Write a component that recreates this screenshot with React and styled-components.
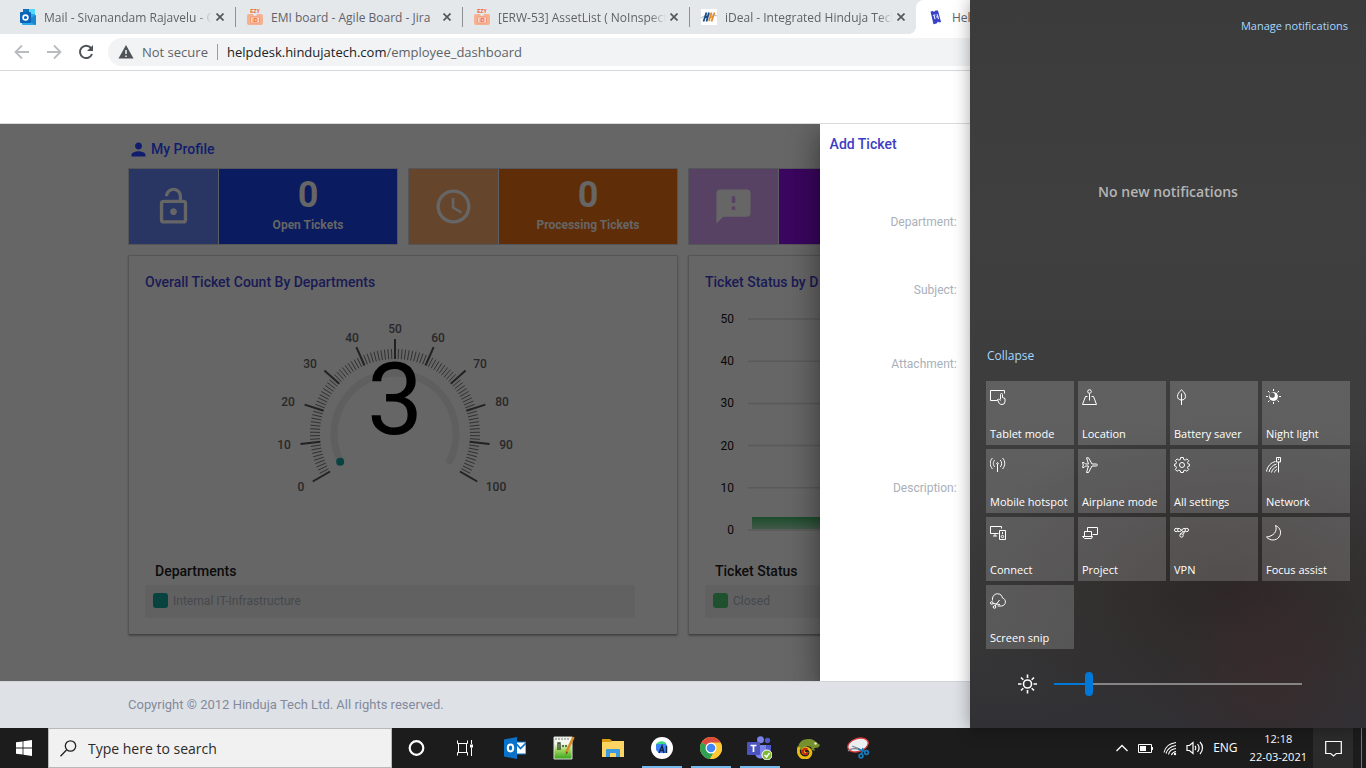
import React from "react";
import styled, { createGlobalStyle, css } from "styled-components";

const GlobalStyle = createGlobalStyle`
  *, *::before, *::after { box-sizing: border-box; }
  body { margin: 0; font-family: "Open Sans", "Noto Sans", sans-serif; }
  button, input, select, textarea { font: inherit; }
  button { border: 0; padding: 0; background: none; color: inherit; cursor: pointer; }
  svg { display: block; flex: none; }
`;

const Desktop = styled.div`
  position: relative;
  display: flex;
  flex-direction: column;
  height: 100vh;
  overflow: hidden;
  background: #fff;
`;

/* ---------- Browser ---------- */

const Browser = styled.div`
  flex: 1;
  min-height: 0;
  display: flex;
  flex-direction: column;
`;

const TabStrip = styled.div`
  display: flex;
  height: 34px;
  padding-left: 8px;
  background: #e5e8eb;
`;

const Tab = styled.div`
  position: relative;
  display: flex;
  align-items: center;
  width: 227px;
  padding-left: 12px;
  gap: 8px;
  color: #5f6368;
  font-size: 12px;
  ${(p) =>
    p.$active &&
    css`
      flex: 1;
      background: #fff;
      border-top-left-radius: 8px;
      &::before {
        content: "";
        position: absolute;
        left: -8px;
        bottom: 0;
        width: 8px;
        height: 8px;
        background: radial-gradient(circle at 0 0, #e5e8eb 8px, #fff 8px);
      }
    `}
`;

const TabTitle = styled.span`
  flex: 1;
  overflow: hidden;
  white-space: nowrap;
  mask-image: ${(p) =>
    p.$fade ? "linear-gradient(90deg, #000 calc(100% - 16px), transparent)" : "none"};
`;

const TabClose = styled.button`
  display: grid;
  place-items: center;
  width: 16px;
  height: 16px;
  margin: 0 -1px 0 -8px;
`;

const TabDivider = styled.span`
  width: 1px;
  height: 20px;
  margin-right: -1px;
  background: ${(p) => (p.$hidden ? "transparent" : "#8d9094")};
`;

const Toolbar = styled.div`
  display: flex;
  align-items: center;
  height: 37px;
  padding-left: 14px;
  gap: 16px;
  border-bottom: 1px solid #d6d8da;
`;

const NavButton = styled.button`
  width: 16px;
  height: 16px;
  color: ${(p) => (p.disabled ? "#b9bbbe" : "#4f5358")};
`;

const AddressBar = styled.div`
  flex: 1;
  display: flex;
  align-items: center;
  height: 28px;
  margin-left: -2px;
  padding-left: 10px;
  gap: 8px;
  border-radius: 14px 0 0 14px;
  background: #f1f3f4;
  color: #5f6368;
  font-size: 13px;
  white-space: nowrap;
`;

const AddressDivider = styled.span`
  width: 1px;
  height: 16px;
  margin: 0 1px;
  background: #9a9da1;
`;

const Host = styled.span`
  color: #202124;
`;

/* ---------- Page ---------- */

const Page = styled.div`
  flex: 1;
  min-height: 0;
  display: flex;
  flex-direction: column;
  font-family: Roboto, sans-serif;
`;

const SiteHeader = styled.header`
  height: 53px;
  border-bottom: 1px solid #d9dbdd;
  background: #fff;
`;

const Main = styled.main`
  position: relative;
  flex: 1;
  min-height: 0;
  overflow: hidden;
  padding: 14px 128px 0;
  background: #666;
`;

const ProfileLink = styled.a`
  display: flex;
  align-items: center;
  gap: 2px;
  height: 22px;
  color: #101d6e;
  font-size: 14px;
  font-weight: 500;
  text-decoration: none;
`;

const StatGrid = styled.div`
  display: grid;
  grid-template-columns: repeat(4, 1fr);
  gap: 10px;
  margin-top: 8px;
`;

const StatCard = styled.section`
  display: flex;
  height: 77px;
  border: 1px solid #545659;
  color: #666;
`;

const StatIcon = styled.div`
  display: grid;
  place-items: center;
  width: 90px;
  border-right: 1px solid #5c5f64;
  background: ${(p) => p.$color};
`;

const StatBody = styled.div`
  flex: 1;
  display: flex;
  flex-direction: column;
  align-items: center;
  padding-top: 6px;
  background: ${(p) => p.$color};
`;

const StatValue = styled.strong`
  font-size: 36px;
  line-height: 40px;
`;

const StatLabel = styled.span`
  font-size: 12px;
  font-weight: 700;
  line-height: 20px;
`;

const CardGrid = styled.div`
  display: grid;
  grid-template-columns: repeat(2, 1fr);
  gap: 10px;
  margin-top: 10px;
`;

const Card = styled.section`
  height: 380px;
  padding: 16px;
  border: 1px solid #555;
  border-bottom-color: #444;
  border-radius: 2px;
  box-shadow: 0 1px 2px rgba(0, 0, 0, 0.3);
`;

const CardTitle = styled.h2`
  margin: 0;
  color: #1a1a55;
  font-size: 14px;
  font-weight: 500;
  line-height: 20px;
`;

const ChartArea = styled.div`
  height: 269px;
  svg { overflow: visible; }
`;

const LegendTitle = styled.h3`
  margin: 0 0 4px 10px;
  color: #0c0c0c;
  font-size: 14px;
  font-weight: 500;
  line-height: 20px;
`;

const Legend = styled.div`
  display: flex;
  align-items: center;
  gap: 5px;
  height: 33px;
  margin-right: 26px;
  padding: 0 8px 2px;
  border-radius: 3px;
  background: #616161;
  color: #45484d;
  font-size: 12px;
`;

const Swatch = styled.span`
  width: 15px;
  height: 15px;
  border-radius: 3px;
  background: ${(p) => p.$color};
`;

const Drawer = styled.form`
  position: absolute;
  top: 0;
  right: 0;
  bottom: 0;
  width: 40%;
  padding: 10px 10px 0;
  background: #fff;
  box-shadow: 0 8px 10px -5px rgba(0, 0, 0, 0.2), 0 16px 24px 2px rgba(0, 0, 0, 0.2),
    0 6px 30px 5px rgba(0, 0, 0, 0.2);
`;

const DrawerTitle = styled.h2`
  margin: 0 0 52px;
  color: #3c3cc4;
  font-size: 14px;
  font-weight: 500;
  line-height: 20px;
`;

const Field = styled.div`
  display: grid;
  grid-template-columns: 127px 1fr;
  column-gap: 24px;
  align-items: center;
  height: ${(p) => p.$height}px;
`;

const FieldLabel = styled.label`
  color: #a9b0b9;
  font-size: 12px;
  line-height: 16px;
  text-align: right;
`;

const controlStyle = css`
  width: 100%;
  height: 32px;
  border: 1px solid #d5d9de;
  border-radius: 3px;
  background: #fff;
`;
const TextInput = styled.input`${controlStyle}`;
const Select = styled.select`${controlStyle}`;
const TextArea = styled.textarea`
  ${controlStyle}
  height: 96px;
  resize: none;
`;

const Footer = styled.footer`
  display: flex;
  align-items: center;
  height: 47px;
  padding: 0 128px 2px;
  border-top: 1px solid #d0d4d8;
  background: #dee1e6;
  color: #838a9c;
  font-size: 13px;
`;

/* ---------- Action centre ---------- */

const ActionCenter = styled.aside`
  position: absolute;
  top: 0;
  right: 0;
  bottom: 40px;
  width: 396px;
  display: flex;
  flex-direction: column;
  padding: 0 16px;
  background:
    radial-gradient(ellipse 100px 120px at 76% 92%, rgba(62, 40, 43, 0.5), transparent),
    radial-gradient(ellipse 280px 170px at 66% 81%, rgba(44, 38, 38, 0.95), transparent),
    linear-gradient(#3b3b3b 0%, #3f3f3f 30%, #3c3c3c 62%, #383838 85%, #313135 100%);
  box-shadow: 0 0 16px rgba(0, 0, 0, 0.35);
  color: #fff;
  font-size: 12px;
`;

const PanelLink = styled.a`
  color: #a6d8ff;
  font-size: ${(p) => (p.$small ? 11 : 12)}px;
  line-height: 16px;
  text-decoration: none;
`;

const PanelTop = styled.div`
  display: flex;
  justify-content: flex-end;
  padding: 18px 2px 0 0;
`;

const EmptyState = styled.p`
  margin: 148px 0 0;
  color: #b5b5b5;
  font-size: 14px;
  font-weight: 600;
  line-height: 20px;
  text-align: center;
`;

const QuickActions = styled.div`
  display: flex;
  flex-direction: column;
  margin-top: auto;
  padding-bottom: 24px;
`;

const PanelToggle = styled.button`
  align-self: flex-start;
  padding-left: 1px;
  color: #a6d8ff;
  font-size: 12px;
  line-height: 16px;
`;

const TileGrid = styled.div`
  display: grid;
  grid-template-columns: repeat(4, minmax(0, 1fr));
  grid-auto-rows: 64px;
  gap: 4px;
  margin: 17px 0 15px;
`;

const Tile = styled.button`
  display: flex;
  flex-direction: column;
  align-items: flex-start;
  justify-content: space-between;
  padding: 8px 0 3px 4px;
  background: rgba(255, 255, 255, 0.18);
  font-size: 11px;
  line-height: 16px;
  white-space: nowrap;
`;

const Brightness = styled.label`
  display: flex;
  align-items: center;
  gap: 16px;
  height: 40px;
  padding: 0 48px 0 31px;
`;

const Slider = styled.input`
  flex: 1;
  min-width: 0;
  height: 24px;
  margin: 0;
  appearance: none;
  background: transparent;
  &::-webkit-slider-runnable-track {
    height: 2px;
    background: linear-gradient(90deg, #0078d7 14%, #858585 14%);
  }
  &::-webkit-slider-thumb {
    appearance: none;
    width: 8px;
    height: 24px;
    margin-top: -11px;
    border-radius: 4px;
    background: #0078d7;
  }
`;

/* ---------- Taskbar ---------- */

const Taskbar = styled.nav`
  display: flex;
  height: 40px;
  background: #1c1c1c;
  color: #fff;
`;

const StartButton = styled.button`
  display: grid;
  place-items: center;
  width: 48px;
`;

const SearchBox = styled.label`
  display: flex;
  align-items: center;
  gap: 11px;
  width: 344px;
  padding-left: 11px;
  border: 1px solid #b9b9b9;
  background: #f1f1f1;
  color: #2b2b2b;
`;

const SearchInput = styled.input`
  flex: 1;
  min-width: 0;
  padding: 0;
  border: 0;
  outline: 0;
  background: transparent;
  font-size: 14px;
  &::placeholder { color: #2b2b2b; opacity: 1; }
`;

const AppButton = styled.button`
  display: grid;
  place-items: center;
  position: relative;
  width: 49px;
  ${(p) =>
    p.$running &&
    css`
      &::after {
        content: "";
        position: absolute;
        left: 5px;
        right: 4px;
        bottom: 0;
        height: 2px;
        background: #76b9ed;
      }
    `}
`;

const Tray = styled.div`
  display: flex;
  align-items: center;
  gap: 9px;
  margin-left: auto;
  font-size: 12px;
`;

const TrayButton = styled.button`
  line-height: 16px;
`;

const Clock = styled.time`
  margin: 0 -3px 0 3px;
  font-size: 11px;
  line-height: 18px;
  text-align: center;
`;

const NotificationButton = styled.button`
  display: grid;
  place-items: center;
  align-self: stretch;
  width: 40px;
  background: #2b2b2b;
`;

const ShowDesktop = styled.button`
  align-self: stretch;
  width: 5px;
  margin-left: -1px;
  border-left: 1px solid #777;
`;

/* ---------- Icons ---------- */

const OutlookFavicon = () => (
  <svg width="16" height="16" viewBox="0 0 16 16">
    <rect x="3" y="0" width="12" height="10" rx="1" fill="#28a8ea" />
    <rect x="9" y="0" width="6" height="5" fill="#50d9ff" />
    <rect x="3" y="0" width="6" height="4" fill="#0f6fc0" />
    <path d="M2 15V9l7 2 7-5v9a1 1 0 0 1-1 1H3a1 1 0 0 1-1-1z" fill="#28a8ea" />
    <path d="M16 6v9a1 1 0 0 1-.6.9L7 11z" fill="#1a86d0" />
    <rect x="0" y="3" width="11" height="11" rx="1" fill="#0a63b8" />
    <circle cx="5.5" cy="8.5" r="2.4" fill="none" stroke="#fff" strokeWidth="1.6" />
  </svg>
);

const EzyFavicon = () => (
  <svg width="16" height="16" viewBox="0 0 16 16" fontFamily="Liberation Sans, sans-serif" fontWeight="700">
    <text x="8" y="4" fontSize="5" textAnchor="middle" fill="#ee5a24">EZY</text>
    <path d="M2 5h4a2 2 0 0 0 4 0h4a2 2 0 0 1 2 2v7a2 2 0 0 1-2 2H2a2 2 0 0 1-2-2V7a2 2 0 0 1 2-2z" fill="#f6b092" />
    <rect x="3.500" y="8" width="9" height="6" rx="1" fill="#fbd9c9" stroke="#f09a78" />
    <text x="8" y="13" fontSize="5" textAnchor="middle" fill="#ee5a24">iD</text>
  </svg>
);

const HindujaFavicon = () => (
  <svg width="16" height="16" viewBox="0 0 16 16">
    <rect width="16" height="16" fill="#fff" />
    <path d="M0 9c5-4 10-4 16-2" stroke="#b9c2cc" strokeWidth="1.300" fill="none" />
    <path d="M5.500 3.500 2.500 12.500M8 3.500 5.500 12.500M4 8h3" stroke="#1b4c86" strokeWidth="1.800" fill="none" />
    <path d="M9.500 8h3M13.500 3.500l-3 9M10.500 3.500 8 12" stroke="#e58a26" strokeWidth="1.700" fill="none" />
  </svg>
);

const HelpdeskFavicon = () => (
  <svg width="16" height="16" viewBox="0 0 16 16">
    <path d="M2.500 2.500 5 2l1 1 1.500-1.600L10 1.500l3 11.500-2 .5-1-1-1.500 2-3 .8z" fill="#3640c8" />
    <path d="M5 6.500l2.500-.8M6 6.200l1 4M9 5.200l1.500 5M8 8l2.500-.8" stroke="#dfe2ff" strokeWidth="1.200" fill="none" />
  </svg>
);

const CloseIcon = () => (
  <svg width="8" height="8" viewBox="0 0 8 8">
    <path d="M.5.5l7 7M7.500.5l-7 7" stroke="#54575b" strokeWidth="1.700" />
  </svg>
);

const ArrowIcon = ({ flip }) => (
  <svg width="16" height="16" viewBox="0 0 16 16" fill="none" stroke="currentColor" strokeWidth="1.800">
    <path d={flip ? "M1 8h13M8 1.500 14.500 8 8 14.500" : "M15 8H2M8 1.500 1.500 8 8 14.500"} />
  </svg>
);

const ReloadIcon = () => (
  <svg width="16" height="16" viewBox="0 0 16 16">
    <path d="M13 4a6.200 6.200 0 1 0 1 6" fill="none" stroke="currentColor" strokeWidth="2" />
    <path d="M15 1v6H9z" fill="currentColor" />
  </svg>
);

const WarningIcon = () => (
  <svg width="16" height="16" viewBox="0 0 16 16">
    <path d="M8 1l7.500 13.500H.5z" fill="#4f5358" />
    <path d="M8 6v4M8 11.500v1.500" stroke="#f1f3f4" strokeWidth="1.500" />
  </svg>
);

const material = {
  person: "M12 12c2.210 0 4-1.790 4-4s-1.790-4-4-4-4 1.790-4 4 1.790 4 4 4zm0 2c-2.670 0-8 1.340-8 4v2h16v-2c0-2.660-5.330-4-8-4z",
  lockOpen: "M12 17c1.100 0 2-.9 2-2s-.9-2-2-2-2 .9-2 2 .9 2 2 2zm6-9h-1V6c0-2.760-2.240-5-5-5S7 3.240 7 6h1.900c0-1.710 1.390-3.100 3.100-3.100s3.100 1.390 3.100 3.100v2H6c-1.100 0-2 .9-2 2v10c0 1.100.9 2 2 2h12c1.100 0 2-.9 2-2V10c0-1.100-.9-2-2-2zm0 12H6V10h12v10z",
  clock: "M11.990 2C6.470 2 2 6.480 2 12s4.470 10 9.990 10C17.520 22 22 17.520 22 12S17.520 2 11.990 2zM12 20c-4.420 0-8-3.580-8-8s3.580-8 8-8 8 3.580 8 8-3.580 8-8 8zm.5-13H11v6l5.250 3.150.75-1.230-4.500-2.670z",
  feedback: "M20 2H4c-1.100 0-1.990.9-1.990 2L2 22l4-4h14c1.100 0 2-.9 2-2V4c0-1.100-.9-2-2-2zm-7 12h-2v-2h2v2zm0-4h-2V6h2v4z",
};

const MaterialIcon = ({ name, size }) => (
  <svg width={size} height={size} viewBox="0 0 24 24" fill="currentColor">
    <path d={material[name]} />
  </svg>
);

const TileIcon = ({ children }) => (
  <svg width="16" height="16" viewBox="0 0 16 16" fill="none" stroke="#fff" strokeWidth="1">
    {children}
  </svg>
);

const tiles = [
  ["Tablet mode", <><path d="M7.500 11.500H.5v-10h14v3" /><path d="M10.500 10.500V5.500a1 1 0 0 1 2 0v3l2.500 1v3a3 3 0 0 1-3 3c-2 0-3-1-3.500-2.500L7.500 10.500c1-.8 2-.2 3 1" /></>],
  ["Location", <><circle cx="7.500" cy="2.500" r="1.800" /><path d="M7.500 4.500v7M5.500 7.500h-2l-3 8h14l-3-8h-2" /></>],
  ["Battery saver", <path d="M7.500 16V4.500M7.500.8C5 3 3.500 5 3.500 7.500c0 2 1.500 3.500 4 3.500s4-1.500 4-3.500C11.500 5 10 3 7.500.8z" />],
  ["Night light", <><circle cx="7.500" cy="7.500" r="4" fill="#fff" /><circle cx="6.200" cy="6.200" r="2.600" fill="#5e5e5e" stroke="none" /><path d="M7.500 0v2M7.500 13v2M0 7.500h2M13 7.500h2M2 2l1.500 1.500M11.500 11.500 13 13M2 13l1.500-1.500M11.500 3.500 13 2" /></>],
  ["Mobile hotspot", <><path d="M7.500 7v8" /><circle cx="7.500" cy="6.500" r=".8" /><path d="M4.800 10c-2-2-2-5 0-7M10.200 10c2-2 2-5 0-7M2.500 12c-3-3.500-3-8 0-11M12.500 12c3-3.500 3-8 0-11" /></>],
  ["Airplane mode", <path d="M.5 5.500H2L3.500 7h3L4.500.8h2L10 7h4c2 .2 2 1.800 0 2h-4l-3.500 6.500h-2L6.500 9h-3L2 10.500H.5l.8-2.500z" />],
  ["All settings", <><circle cx="8" cy="8" r="2.500" /><path d="M6.700.5h2.600l.4 2 1.500.6 1.700-1.200 1.800 1.800-1.200 1.700.6 1.500 1.500.3v1.800l-1.500.3-.6 1.500 1.200 1.700-1.800 1.800-1.700-1.200-1.500.6-.4 1.800H6.700l-.4-1.800-1.500-.6-1.700 1.200-1.800-1.800 1.200-1.700-.6-1.500L.5 9V7.200l1.400-.3.6-1.500-1.200-1.700 1.800-1.800 1.700 1.200 1.500-.6z" /></>],
  ["Network", <><path d="M.5 14.500C1.500 9 5 5.500 9.500 4.500M3 15C4 11 6.500 8 10.500 7M5.500 15.500C6 13 8 10.500 11 9.500M8.500 15.500c.3-1.500 1.200-2.500 2.500-3" /><path d="M10.500.5h4v4.500h-4zM12.500 5v10.500M12.500 1.500v1.500" /></>],
  ["Connect", <><path d="M8.500 8.500h-8v-7h11v2M5 8.500V11M3 11h4" /><path d="M9.500 5.500h6v9h-6z" /><path d="M12.500 7v2" /><circle cx="12.500" cy="11.500" r="1.200" /></>],
  ["Project", <><path d="M5.500 6V2.500h10v7h-5" /><path d="M2.500 6.500h7v5h-7zM.5 11.500h10l-1 2h-7z" /></>],
  ["VPN", <><circle cx="2.200" cy="5" r="1.700" /><circle cx="7.500" cy="10.500" r="1.700" /><circle cx="12.800" cy="5" r="1.700" /><path d="M3.500 3.500h2l4 3.500M3.800 6.500h1.700c2.500 0 2-3 4.500-3h1.500M6 9.200C8 8 8 6.500 11.300 6.200M9 9.500C10.500 9 9 7 11.300 6.500" /></>],
  ["Focus assist", <path d="M9.500.5c2.500 6-2.500 11-9 11.500 3.500 4 9.500 4 12.500 0s1.500-9.500-3.500-11.500z" />],
  ["Screen snip", <><path d="M2.500 7.500C2 4 4 .8 7.500.8S12 3 12.500 5c4 1 4 7.500-1 8H7.500" /><circle cx="1.800" cy="10" r="1.300" /><circle cx="4.500" cy="14" r="1.300" /><path d="M3 10.500l7 1M5 13l4.500-6" /></>],
];

const SunIcon = () => (
  <svg width="21" height="20" viewBox="0 0 20 20" fill="none" stroke="#fff" strokeWidth="1.600">
    <circle cx="10" cy="10" r="4" />
    <path d="M10 .5V4M10 16v3.500M.5 10H4M16 10h3.500M3.500 3.500l2.300 2.300M14.200 14.200l2.300 2.300M3.500 16.500l2.300-2.300M14.200 5.800l2.300-2.300" />
  </svg>
);

const WindowsIcon = () => (
  <svg width="16" height="16" viewBox="0 0 16 16" fill="#fff">
    <path d="M0 2.300 6.600 1.400v6.200H0zM7.400 1.300 16 0v7.600H7.400zM0 8.400h6.600v6.200L0 13.700zM7.400 8.400H16V16l-8.600-1.300z" />
  </svg>
);

const SearchIcon = () => (
  <svg width="17" height="17" viewBox="0 0 17 17" fill="none" stroke="#222" strokeWidth="1.300">
    <circle cx="10.500" cy="6" r="5.200" />
    <path d="M6.500 10 .5 16.300" />
  </svg>
);

const CortanaIcon = () => (
  <svg width="18" height="18" viewBox="0 0 18 18">
    <circle cx="8.500" cy="9" r="6.800" fill="none" stroke="#fff" strokeWidth="2.200" />
  </svg>
);

const TaskViewIcon = () => (
  <svg width="18" height="16" viewBox="0 0 18 16" fill="none" stroke="#fff">
    <path d="M.5.5v3h10v-3M1.500 3.500v9M9.500 3.500v9M.5 15.500v-3h10v3M14.500 0v4M14.500 7.500V16" />
    <path d="M13 4.500h3v3h-3z" fill="#fff" stroke="none" />
  </svg>
);

const OutlookIcon = () => (
  <svg width="22" height="22" viewBox="0 0 22 22">
    <rect x="11" y="5" width="11" height="12" fill="#fff" />
    <path d="M11 5h11v12H11z" fill="none" stroke="#0a72c8" />
    <path d="M12.500 7l4 4.500L22 6" fill="none" stroke="#0a72c8" strokeWidth="1.700" />
    <path d="M0 2.500 13 0v22L0 19.500z" fill="#0a72c8" />
    <ellipse cx="6.500" cy="11" rx="2.700" ry="3.400" fill="none" stroke="#fff" strokeWidth="2" />
  </svg>
);

const NotepadIcon = () => (
  <svg width="22" height="24" viewBox="0 0 22 24">
    <defs>
      <linearGradient id="notepadGreen" x2="0" y2="1">
        <stop offset=".3" stopColor="#f4f7f0" />
        <stop offset=".6" stopColor="#9ed65c" />
        <stop offset="1" stopColor="#37a31b" />
      </linearGradient>
    </defs>
    <path d="M1 1h18v22H1z" fill="url(#notepadGreen)" stroke="#d9ddd5" />
    <path d="M3 2v2M6 2v2M9 2v2M12 2v2M15 2v2" stroke="#777" />
    <path d="M5 14V7h2v7M9 10h2M12 10h2" stroke="#314b2c" strokeWidth="1.400" fill="none" />
    <path d="M20.500 1 13 17" stroke="#d98b24" strokeWidth="2.600" />
    <path d="M13.500 15.500 12.500 19l2.500-2.500z" fill="#6b4716" />
  </svg>
);

const FolderIcon = () => (
  <svg width="22" height="20" viewBox="0 0 22 20">
    <path d="M0 1h8l2 2h12v5H0z" fill="#dc9a11" />
    <path d="M0 4h9l1-1h12v16H0z" fill="#fcd462" />
    <path d="M4 19v-7a1 1 0 0 1 1-1h12a1 1 0 0 1 1 1v7h-4v-4H8v4z" fill="#3a9be0" />
  </svg>
);

const StudioIcon = () => (
  <svg width="22" height="22" viewBox="0 0 22 22">
    <circle cx="11" cy="11" r="11" fill="#fff" />
    <path d="M5 7c2-3 7-4 10-1v4H5z" fill="#3ddc84" />
    <path d="M6 7h8a2 2 0 0 1 2 2v7H8l-3-3V8z" fill="#3b82f6" />
    <path d="M8 16l3-7 2 7M9 13.500h3.500M15.500 9v7" fill="none" stroke="#14264a" strokeWidth="1.500" />
  </svg>
);

const ChromeIcon = () => (
  <svg width="22" height="22" viewBox="0 0 22 22">
    <circle cx="11" cy="11" r="11" fill="#fbbc2c" />
    <path d="M11 11 1.500 5.500A11 11 0 0 1 20.500 5.500z" fill="#dd4b3e" />
    <path d="M11 11 1.500 5.500A11 11 0 0 0 10 22l5-9z" fill="#2fa152" />
    <path d="M11 5.500h9.500a11 11 0 0 1-10.500 16.500l5-9z" fill="#fcc934" />
    <circle cx="11" cy="11" r="5.500" fill="#fff" />
    <circle cx="11" cy="11" r="4.300" fill="#4285f4" />
  </svg>
);

const TeamsIcon = () => (
  <svg width="25" height="24" viewBox="0 0 25 24">
    <circle cx="20.500" cy="4.500" r="2.700" fill="#5059c9" />
    <circle cx="13.500" cy="3.700" r="3.500" fill="#7b83eb" />
    <path d="M16 9h8v6a4 4 0 0 1-6 3z" fill="#5059c9" />
    <path d="M8 9h11v8a5.500 5.500 0 0 1-11 0z" fill="#7b83eb" />
    <rect y="6" width="13" height="13" rx="1" fill="#4b53bc" />
    <path d="M3.500 9.500h6M6.500 9.500V16" stroke="#fff" strokeWidth="1.700" />
    <circle cx="20" cy="19" r="5" fill="#7ab930" stroke="#fff" />
    <path d="M17.500 19l2 2 3-4" fill="none" stroke="#fff" strokeWidth="1.500" />
  </svg>
);

const ChameleonIcon = () => (
  <svg width="23" height="21" viewBox="0 0 23 21">
    <path d="M1 11C1 5 5 1 11 1c3 0 6 .5 8 3l4 3c-1 3-4 3-6 3l1 3-3-1-1-3c-5-2-8 1-6 4z" fill="#75902d" />
    <path d="M2 9c-2 6 1 11 6 11s7-5 5-8-7-2-7 1 4 3 4 1" fill="none" stroke="#e9b711" strokeWidth="3" />
    <path d="M10.500 11.500c-3-2-6 1-4 3.500s5 .5 3-1" fill="none" stroke="#c92211" strokeWidth="2" />
    <circle cx="18.500" cy="5.500" r="1.300" fill="#e7edb8" />
  </svg>
);

const SnipIcon = () => (
  <svg width="24" height="22" viewBox="0 0 24 22">
    <ellipse cx="12" cy="8" rx="10.500" ry="6.500" transform="rotate(-18 12 8)" fill="#eceff2" stroke="#d5393c" strokeWidth="1.300" />
    <path d="M2 14c3-3 6-3 10-2M6 9l8 3" stroke="#858b91" strokeWidth="1.300" fill="none" />
    <circle cx="15" cy="19" r="1.900" fill="none" stroke="#187bbb" strokeWidth="1.700" />
    <circle cx="20.500" cy="15.500" r="1.900" fill="none" stroke="#187bbb" strokeWidth="1.700" />
    <path d="M15.500 17l1.500-6M19 14.500l-7-2.500" stroke="#187bbb" strokeWidth="1.500" />
  </svg>
);

const apps = [
  { label: "Cortana", icon: <CortanaIcon /> },
  { label: "Task View", icon: <TaskViewIcon /> },
  { label: "Outlook", icon: <OutlookIcon /> },
  { label: "Notepad++", icon: <NotepadIcon /> },
  { label: "File Explorer", icon: <FolderIcon /> },
  { label: "Android Studio", icon: <StudioIcon />, running: true },
  { label: "Chrome", icon: <ChromeIcon />, running: true },
  { label: "Teams", icon: <TeamsIcon />, running: true },
  { label: "Chameleon", icon: <ChameleonIcon /> },
  { label: "Snipping Tool", icon: <SnipIcon /> },
];

/* ---------- Charts ---------- */

const polar = (angle, r) => {
  const a = (angle * Math.PI) / 180;
  return [250 + r * Math.sin(a), 142 - r * Math.cos(a)];
};

const gaugeLabels = [
  [156, 195], [139, 153], [143, 110], [165, 72], [207, 46], [250, 37],
  [293, 46], [335, 72], [357, 110], [361, 153], [351, 195],
];

function Gauge() {
  const ticks = Array.from({ length: 101 }, (_, i) => {
    const angle = -120 + i * 2.4;
    const major = i % 10 === 0;
    const [x1, y1] = polar(angle, 75);
    const [x2, y2] = polar(angle, major ? 95 : 85);
    return (
      <line key={i} x1={x1} y1={y1} x2={x2} y2={y2} stroke={major ? "#222" : "#303030"} strokeWidth={major ? 2 : 1} />
    );
  });
  const [sx, sy] = polar(-116, 61);
  const [ex, ey] = polar(116, 61);
  return (
    <svg width="500" height="268" viewBox="0 0 500 268">
      <path d={`M${sx} ${sy}A61 61 0 1 1 ${ex} ${ey}`} fill="none" stroke="#5f5f5f" strokeWidth="7" strokeLinecap="round" />
      <circle cx={sx} cy={sy + 1} r="4" fill="#094340" />
      {ticks}
      {gaugeLabels.map(([x, y], i) => (
        <text key={i} x={x} y={y + 4} textAnchor="middle" fontSize="12" fontWeight="500" fill="#282828">
          {i * 10}
        </text>
      ))}
      <text x="250" y="142" textAnchor="middle" fontSize="100" fill="#000">3</text>
    </svg>
  );
}

function BarChart() {
  return (
    <svg width="500" height="268" viewBox="0 0 500 268">
      <defs>
        <linearGradient id="barGreen" x2="0" y2="1">
          <stop offset="0" stopColor="#1d4c2c" />
          <stop offset="1" stopColor="#41594a" />
        </linearGradient>
      </defs>
      {[50, 40, 30, 20, 10, 0].map((value, i) => (
        <g key={value}>
          <line x1="43" x2="490" y1={27 + i * 42.2} y2={27 + i * 42.2} stroke="#5a5a5a" strokeWidth="1.500" />
          <text x="29" y={31 + i * 42.2} textAnchor="end" fontSize="12" fill="#080808">{value}</text>
        </g>
      ))}
      <rect x="47" y="225" width="200" height="12" fill="url(#barGreen)" />
    </svg>
  );
}

/* ---------- Page assembly ---------- */

const tabs = [
  { title: "Mail - Sivanandam Rajavelu - O", icon: <OutlookFavicon />, fade: true },
  { title: "EMI board - Agile Board - Jira", icon: <EzyFavicon /> },
  { title: "[ERW-53] AssetList ( NoInspect", icon: <EzyFavicon />, fade: true },
  { title: "iDeal - Integrated Hinduja Tech", icon: <HindujaFavicon />, fade: true },
];

const stats = [
  { icon: "lockOpen", label: "Open Tickets", value: 0, tint: "#293563", color: "#0a1b5f" },
  { icon: "clock", label: "Processing Tickets", value: 0, tint: "#66452d", color: "#602d09" },
  { icon: "feedback", tint: "#584264", color: "#3a065f" },
];

export default function App() {
  return (
    <Desktop>
      <GlobalStyle />
      <Browser>
        <TabStrip>
          {tabs.map((tab, i) => (
            <Tab key={tab.title}>
              {tab.icon}
              <TabTitle $fade={tab.fade}>{tab.title}</TabTitle>
              <TabClose aria-label="Close tab"><CloseIcon /></TabClose>
              <TabDivider $hidden={i === tabs.length - 1} />
            </Tab>
          ))}
          <Tab $active>
            <HelpdeskFavicon />
            <TabTitle>Hel</TabTitle>
          </Tab>
        </TabStrip>
        <Toolbar>
          <NavButton disabled aria-label="Back"><ArrowIcon /></NavButton>
          <NavButton disabled aria-label="Forward"><ArrowIcon flip /></NavButton>
          <NavButton aria-label="Reload"><ReloadIcon /></NavButton>
          <AddressBar>
            <WarningIcon />
            <span>Not secure</span>
            <AddressDivider />
            <span><Host>helpdesk.hindujatech.com</Host>/employee_dashboard</span>
          </AddressBar>
        </Toolbar>

        <Page>
          <SiteHeader />
          <Main>
            <ProfileLink href="#profile">
              <MaterialIcon name="person" size={21} />
              My Profile
            </ProfileLink>
            <StatGrid>
              {stats.map((stat) => (
                <StatCard key={stat.icon}>
                  <StatIcon $color={stat.tint}><MaterialIcon name={stat.icon} size={41} /></StatIcon>
                  <StatBody $color={stat.color}>
                    {stat.label && (
                      <>
                        <StatValue>{stat.value}</StatValue>
                        <StatLabel>{stat.label}</StatLabel>
                      </>
                    )}
                  </StatBody>
                </StatCard>
              ))}
            </StatGrid>
            <CardGrid>
              <Card>
                <CardTitle>Overall Ticket Count By Departments</CardTitle>
                <ChartArea><Gauge /></ChartArea>
                <LegendTitle>Departments</LegendTitle>
                <Legend><Swatch $color="#094340" />Internal IT-Infrastructure</Legend>
              </Card>
              <Card>
                <CardTitle>Ticket Status by D</CardTitle>
                <ChartArea><BarChart /></ChartArea>
                <LegendTitle>Ticket Status</LegendTitle>
                <Legend><Swatch $color="#1f512f" />Closed</Legend>
              </Card>
            </CardGrid>

            <Drawer>
              <DrawerTitle>Add Ticket</DrawerTitle>
              <Field $height={32}>
                <FieldLabel htmlFor="department">Department:</FieldLabel>
                <Select id="department" />
              </Field>
              <Field $height={104}>
                <FieldLabel htmlFor="subject">Subject:</FieldLabel>
                <TextInput id="subject" />
              </Field>
              <Field $height={44}>
                <FieldLabel htmlFor="attachment">Attachment:</FieldLabel>
                <TextInput id="attachment" />
              </Field>
              <Field $height={204}>
                <FieldLabel htmlFor="description">Description:</FieldLabel>
                <TextArea id="description" />
              </Field>
            </Drawer>
          </Main>
          <Footer>Copyright © 2012 Hinduja Tech Ltd. All rights reserved.</Footer>
        </Page>
      </Browser>

      <ActionCenter>
        <PanelTop><PanelLink $small href="#manage">Manage notifications</PanelLink></PanelTop>
        <EmptyState>No new notifications</EmptyState>
        <QuickActions>
          <PanelToggle>Collapse</PanelToggle>
          <TileGrid>
            {tiles.map(([label, icon]) => (
              <Tile key={label}>
                <TileIcon>{icon}</TileIcon>
                {label}
              </Tile>
            ))}
          </TileGrid>
          <Brightness>
            <SunIcon />
            <Slider type="range" min="0" max="100" defaultValue="13" aria-label="Brightness" />
          </Brightness>
        </QuickActions>
      </ActionCenter>

      <Taskbar>
        <StartButton aria-label="Start"><WindowsIcon /></StartButton>
        <SearchBox>
          <SearchIcon />
          <SearchInput placeholder="Type here to search" />
        </SearchBox>
        {apps.map((app) => (
          <AppButton key={app.label} aria-label={app.label} $running={app.running}>{app.icon}</AppButton>
        ))}
        <Tray>
          <TrayButton aria-label="Show hidden icons">
            <svg width="14" height="16" viewBox="0 0 14 16" fill="none" stroke="#fff" strokeWidth="1.300">
              <path d="M1.500 11 7 5.500l5.500 5.500" />
            </svg>
          </TrayButton>
          <TrayButton aria-label="Battery">
            <svg width="16" height="16" viewBox="0 0 16 16" fill="none" stroke="#fff">
              <path d="M.5 4.500h13v8H.5zM14.500 7v3" />
              <path d="M2 6h6v5H2z" fill="#fff" stroke="none" />
            </svg>
          </TrayButton>
          <TrayButton aria-label="Wi-Fi">
            <svg width="14" height="16" viewBox="0 0 14 16" fill="none" stroke="#fff" strokeWidth="1.100">
              <path d="M1 12.500C2 7 6 3.500 13 2.500M3 13.500C4 9.500 7.500 6.500 13 5.500M5.500 14.500C6 11.500 9 9 13 8.500M8.500 15c.5-2 2-3 4.500-3.500" />
              <circle cx="12" cy="14" r="1.200" fill="#fff" stroke="none" />
            </svg>
          </TrayButton>
          <TrayButton aria-label="Volume">
            <svg width="18" height="16" viewBox="0 0 18 16" fill="none" stroke="#fff" strokeWidth="1.200">
              <path d="M1 5.500h2.500L7 2.500v11L3.500 10.500H1zM9 6c1 1 1 3 0 4M11.500 4c2 2.500 2 5.500 0 8M14 2c3.300 3.500 3.300 8.500 0 12" />
            </svg>
          </TrayButton>
          <TrayButton>ENG</TrayButton>
          <Clock>12:18<br />22-03-2021</Clock>
          <NotificationButton aria-label="Notifications">
            <svg width="17" height="17" viewBox="0 0 17 17" fill="none" stroke="#fff" strokeWidth="1.200">
              <path d="M.7 1.500h15.600v12h-5L8.500 16 5.700 13.500h-5z" />
            </svg>
          </NotificationButton>
          <ShowDesktop aria-label="Show desktop" />
        </Tray>
      </Taskbar>
    </Desktop>
  );
}
